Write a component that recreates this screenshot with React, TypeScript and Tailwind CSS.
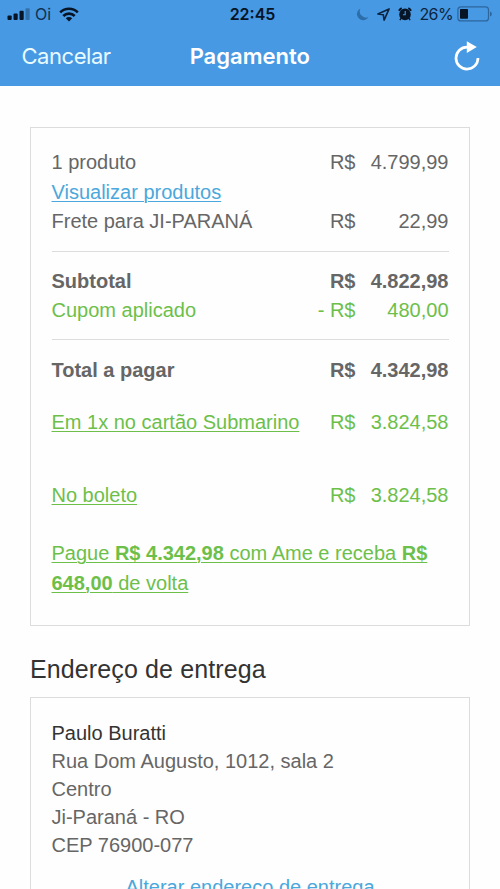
import React from "react";
import { cx } from "class-variance-authority";

function SignalIcon() {
  return (
    <svg width="23" height="12" viewBox="0 0 23 12" fill="#071426">
      <rect x="0.5" y="7.5" width="4.2" height="4.5" rx="1" />
      <rect x="6.5" y="5.5" width="4.2" height="6.5" rx="1" />
      <rect x="12.5" y="2.8" width="4.2" height="9.2" rx="1" />
      <rect x="18.5" y="0.2" width="4.2" height="11.8" rx="1" opacity="0.3" />
    </svg>
  );
}

function WifiIcon() {
  return (
    <svg width="20" height="15" viewBox="0 0 20 15" fill="none" stroke="#071426" strokeWidth="2.6">
      <path d="M1.2 5.4a12.6 12.6 0 0 1 17.6 0" />
      <path d="M4.3 9a8 8 0 0 1 11.4 0" />
      <path d="M10 14.4l-3.2-3.1a4.6 4.6 0 0 1 6.4 0z" fill="#071426" stroke="none" />
    </svg>
  );
}

function MoonIcon() {
  return (
    <svg width="13" height="13" viewBox="0 0 13 13" fill="#2c6ea9">
      <path d="M4.4 0.5A6.2 6.2 0 1 0 12.6 9 6.3 6.3 0 0 1 4.4 0.5z" />
    </svg>
  );
}

function LocationIcon() {
  return (
    <svg width="13" height="13" viewBox="0 0 13 13" fill="none" stroke="#0d2440" strokeWidth="1.6" strokeLinejoin="round">
      <path d="M12.1 0.9L0.9 6l5.4.7.8 5.4z" />
    </svg>
  );
}

function AlarmIcon() {
  return (
    <svg width="14" height="14" viewBox="0 0 14 14">
      <circle cx="7" cy="7.4" r="5.8" fill="#071426" />
      <path d="M0.9 3.8a7.4 7.4 0 0 1 2.8-2.7M13.1 3.8a7.4 7.4 0 0 0-2.8-2.7" stroke="#071426" strokeWidth="1.8" fill="none" />
      <path d="M3.2 11.2l-1.3 1.9M10.8 11.2l1.3 1.9" stroke="#071426" strokeWidth="1.4" />
      <path d="M7.2 4v3.7H4.9" stroke="#4799e4" strokeWidth="1.1" fill="none" />
    </svg>
  );
}

function BatteryIcon() {
  return (
    <svg width="36" height="16" viewBox="0 0 36 16">
      <rect x="0.9" y="0.9" width="30.6" height="14" rx="3" fill="none" stroke="#2d669c" strokeWidth="1.2" />
      <rect x="3" y="3" width="8" height="9.8" rx="0.8" fill="#071426" />
      <path d="M33 5.4q1.9.8 1.9 2.5T33 10.4z" fill="#2d669c" />
    </svg>
  );
}

function ReloadIcon() {
  return (
    <svg width="26" height="30" viewBox="0 0 26 30">
      <path d="M13.2 6.1A11 11 0 1 0 24 17.1" fill="none" stroke="#fff" strokeWidth="2.7" />
      <path d="M12.8 0.2L22.8 6l-10 5.9z" fill="#fff" />
    </svg>
  );
}

function PriceRow({
  label,
  value,
  sign = "",
  link = false,
  className = "",
}: {
  label: string;
  value: string;
  sign?: string;
  link?: boolean;
  className?: string;
}) {
  return (
    <div className={cx("flex whitespace-nowrap", className)}>
      <span className={cx("flex-1", link && "underline decoration-1 underline-offset-2")}>{label}</span>
      <span>{sign}R$</span>
      <span className="w-[93px] text-right">{value}</span>
    </div>
  );
}

export default function App() {
  return (
    <div className="w-[500px] h-[889px] overflow-hidden bg-[#fefefe] font-['Liberation_Sans',Arial,sans-serif] text-[#666]">
      <header className="h-[85.5px] bg-[#4799e4]">
        {/* Status bar */}
        <div className="flex items-center h-7 pl-[7px] pr-[7px] font-['Inter',sans-serif] text-[#071426]">
          <div className="flex-1 flex items-center">
            <SignalIcon />
            <span className="ml-[5px] mr-2 text-[16px] text-[#12304f]">Oi</span>
            <WifiIcon />
          </div>
          <span className="mr-[-5px] text-[16px] font-semibold">22:45</span>
          <div className="flex-1 flex items-center justify-end">
            <MoonIcon />
            <span className="ml-2"><LocationIcon /></span>
            <span className="ml-2"><AlarmIcon /></span>
            <span className="ml-[7px] mr-1 text-[16px] tracking-[-0.6px] text-[#0d2440]">26%</span>
            <BatteryIcon />
          </div>
        </div>
        {/* Navigation */}
        <div className="flex items-center h-14 pl-[21.5px] pr-5 font-['Inter',sans-serif] text-[22px] text-white">
          <button className="flex-1 text-left tracking-[-0.45px] text-[#e8fbff]">Cancelar</button>
          <h1 className="mr-0.5 font-semibold">Pagamento</h1>
          <div className="flex-1 flex justify-end">
            <ReloadIcon />
          </div>
        </div>
      </header>

      <main className="px-[30px] pt-[41px]">
        <section className="h-[499px] border border-[#dcdcdc] px-[20.5px] pt-[20.5px] text-[20px] leading-[29.5px]">
          <PriceRow label="1 produto" value="4.799,99" />
          <a className="block underline decoration-1 underline-offset-2 text-[#4aa8dc]">Visualizar produtos</a>
          <PriceRow label="Frete para JI-PARANÁ" value="22,99" />
          <div className="mt-3.5 pt-[15px] pb-[13.5px] border-y border-[#dcdcdc]">
            <PriceRow label="Subtotal" value="4.822,98" className="font-bold" />
            <PriceRow label="Cupom aplicado" value="480,00" sign="- " className="text-[#6cc04a]" />
          </div>
          <PriceRow label="Total a pagar" value="4.342,98" className="mt-[15.5px] font-bold" />
          <div className="text-[#6cc04a]">
            <PriceRow label="Em 1x no cartão Submarino" value="3.824,58" link className="mt-[22.5px]" />
            <PriceRow label="No boleto" value="3.824,58" link className="mt-11" />
            <p className="mt-[28.5px] underline decoration-1 underline-offset-2">
              Pague <b>R$ 4.342,98</b> com Ame e receba <b>R$ 648,00</b> de volta
            </p>
          </div>
        </section>

        <h2 className="mt-[27px] text-[25px] leading-8 tracking-[0.12px] text-[#333]">Endereço de entrega</h2>

        <section className="mt-3 border border-[#dcdcdc] px-[20.5px] pt-[21px] pb-6 text-[20px] leading-7">
          <p className="text-[#333]">Paulo Buratti</p>
          <p>Rua Dom Augusto, 1012, sala 2</p>
          <p>Centro</p>
          <p>Ji-Paraná - RO</p>
          <p>CEP 76900-077</p>
          <a className="block mt-3.5 text-center text-[#4aa8dc]">Alterar endereço de entrega</a>
        </section>
      </main>
    </div>
  );
}
